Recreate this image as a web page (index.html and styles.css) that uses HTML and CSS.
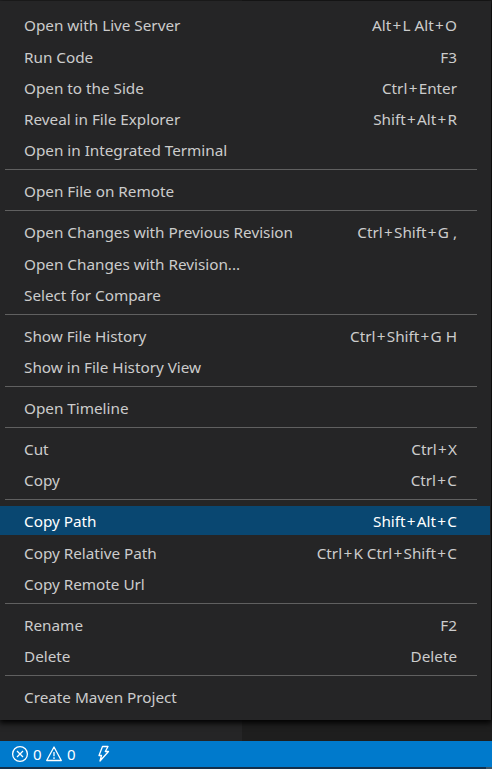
FILE: index.html
```html
<!DOCTYPE html>
<html lang="en">
<head>
<meta charset="utf-8">
<title>Explorer</title>
<link rel="stylesheet" href="styles.css">
</head>
<body>
<main class="window">
  <div class="workarea"><div class="sidebar"></div><div class="editor"></div></div>
  <footer class="statusbar">
    <svg class="icon" viewBox="0 0 18 18"><circle cx="9" cy="9" r="7.4"/><path d="M6 6l6 6M12 6l-6 6"/></svg>
    <span class="count">0</span>
    <svg class="icon warning" viewBox="0 0 18 18"><path d="M9 2L1.700 15.500h14.600zM9 7v4.300M9 12.300v1.700"/></svg>
    <span class="count">0</span>
    <svg class="icon bolt" viewBox="0 0 18 18"><path d="M7.500 1.500h5.500L10.300 6.500h3.200L5 16l1.500-5.500H4z"/></svg>
  </footer>
  <div class="edge"><span></span></div>
  <ul class="menu">
    <li class="item"><span>Open with Live Server</span><span>Alt<i>+</i>L Alt<i>+</i>O</span></li>
    <li class="item"><span>Run Code</span><span>F3</span></li>
    <li class="item"><span>Open to the Side</span><span>Ctrl<i>+</i>Enter</span></li>
    <li class="item"><span>Reveal in File Explorer</span><span>Shift<i>+</i>Alt<i>+</i>R</span></li>
    <li class="item"><span>Open in Integrated Terminal</span></li>
    <li class="separator"></li>
    <li class="item"><span>Open File on Remote</span></li>
    <li class="separator"></li>
    <li class="item"><span>Open Changes with Previous Revision</span><span>Ctrl<i>+</i>Shift<i>+</i>G ,</span></li>
    <li class="item"><span>Open Changes with Revision...</span></li>
    <li class="item"><span>Select for Compare</span></li>
    <li class="separator"></li>
    <li class="item"><span>Show File History</span><span>Ctrl<i>+</i>Shift<i>+</i>G H</span></li>
    <li class="item"><span>Show in File History View</span></li>
    <li class="separator"></li>
    <li class="item"><span>Open Timeline</span></li>
    <li class="separator"></li>
    <li class="item"><span>Cut</span><span>Ctrl<i>+</i>X</span></li>
    <li class="item"><span>Copy</span><span>Ctrl<i>+</i>C</span></li>
    <li class="separator"></li>
    <li class="item selected"><span>Copy Path</span><span>Shift<i>+</i>Alt<i>+</i>C</span></li>
    <li class="item"><span>Copy Relative Path</span><span>Ctrl<i>+</i>K Ctrl<i>+</i>Shift<i>+</i>C</span></li>
    <li class="item"><span>Copy Remote Url</span></li>
    <li class="separator"></li>
    <li class="item"><span>Rename</span><span>F2</span></li>
    <li class="item"><span>Delete</span><span>Delete</span></li>
    <li class="separator"></li>
    <li class="item"><span>Create Maven Project</span></li>
  </ul>
</main>
</body>
</html>
```
FILE: styles.css
```css
* { box-sizing: border-box; }
body { margin: 0; background: #1e1e1e; font-family: "Noto Sans", "Open Sans", sans-serif; }
.window { position: relative; display: flex; flex-direction: column; height: 769px; overflow: hidden; }
.workarea { display: flex; flex: 1; }
.sidebar { width: 242px; background: #252526; }
.editor { flex: 1; background: #1e1e1e; }
.statusbar { display: flex; align-items: center; height: 26px; padding-left: 11px; background: #007acc; color: #fff; font-size: 15px; }
.edge { display: flex; justify-content: flex-end; height: 2px; background: #14304a; }
.edge span { width: 6px; background: #3d5566; }
.icon { width: 18px; height: 18px; fill: none; stroke: #fff; stroke-width: 1.3; stroke-linejoin: round; }
.count { width: 8px; margin: 0 4px; line-height: 26px; }
.bolt { margin-left: 16px; }
.menu { position: absolute; left: 0; top: 1px; width: 491px; height: 719px; margin: 0; padding: 9.25px 1px 0 0; list-style: none; background: #252526; box-shadow: 0 2px 6px 1px #000; color: #ccc; font-size: 15.3px; }
.item { display: flex; justify-content: space-between; height: 29px; margin-bottom: 2.25px; padding: 0 33px 0 24px; line-height: 30px; white-space: nowrap; letter-spacing: -0.02px; }
.item i { padding: 0 1.3px; font-style: normal; }
.item.selected { background: #094771; color: #fff; }
.separator { height: 9.75px; padding: 2.6px 13px 0 5px; }
.separator::before { content: ""; display: block; height: 1px; background: #606060; }
```
